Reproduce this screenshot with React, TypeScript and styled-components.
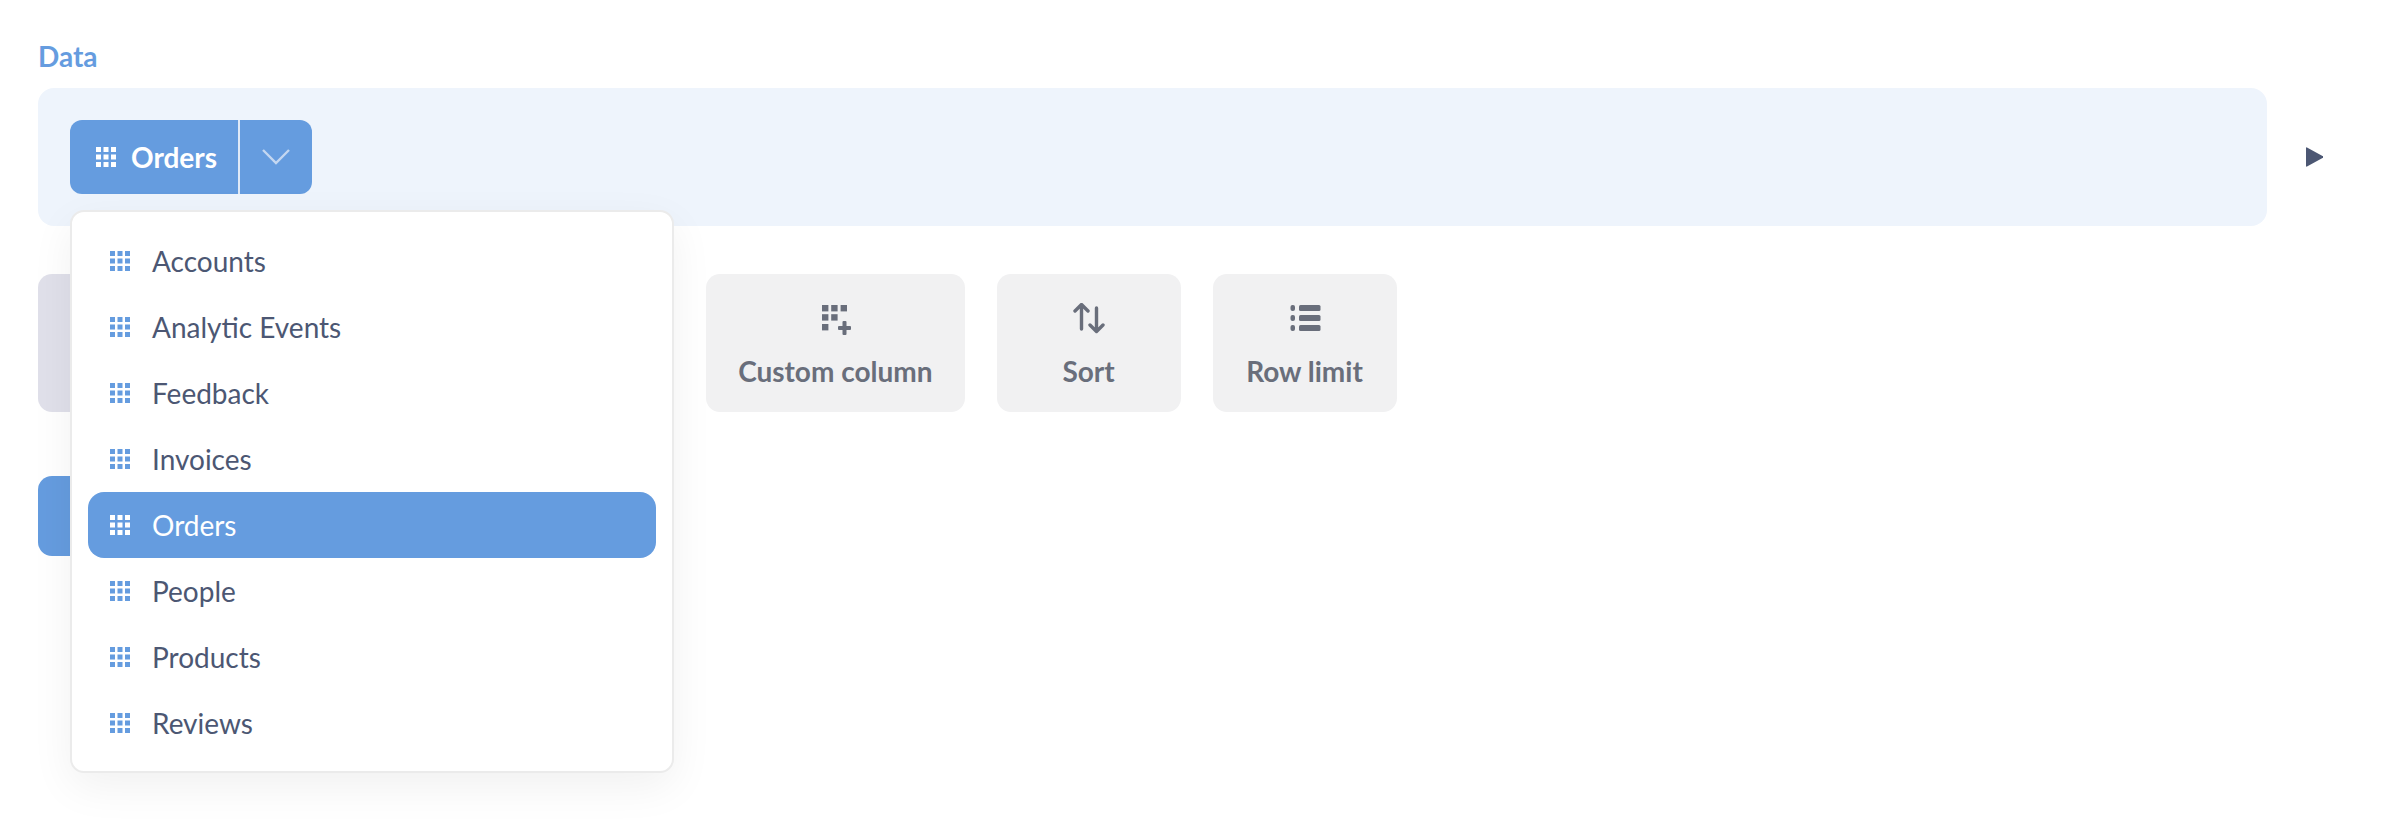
import React from 'react';
import styled, { createGlobalStyle } from 'styled-components';

const GlobalStyle = createGlobalStyle`
  html, body {
    margin: 0;
    background: #fff;
  }
  body {
    font-family: Lato, "Liberation Sans", sans-serif;
    overflow: hidden;
  }
  * {
    box-sizing: border-box;
  }
`;

const Page = styled.div`
  padding: 38px 38px 0;
  height: 822px;
`;

const StepTitle = styled.div`
  font-size: 28px;
  line-height: 36px;
  font-weight: 700;
  color: #659cdf;
  margin-bottom: 14px;
`;

const StepRow = styled.div`
  display: flex;
  align-items: center;
`;

const DataPanel = styled.div`
  width: 2229px;
  height: 138px;
  padding: 32px;
  border-radius: 16px;
  background: #eef4fc;
`;

const PickerWrap = styled.div`
  position: relative;
  width: 242px;
`;

const Picker = styled.div`
  display: flex;
  height: 74px;
  border-radius: 12px;
  overflow: hidden;
  background: #659cdf;
  color: #fff;
`;

const PickerLabel = styled.div`
  width: 168px;
  display: flex;
  align-items: center;
  gap: 15px;
  padding-left: 26px;
  font-size: 28px;
  font-weight: 700;
`;

const PickerToggle = styled.div`
  flex: 1;
  display: flex;
  align-items: center;
  justify-content: center;
  border-left: 2px solid #dfe9f7;
`;

const RunIcon = styled.svg`
  width: 17px;
  height: 20px;
  margin-left: 39px;
  fill: #4c5773;
`;

const Menu = styled.div`
  position: absolute;
  top: 90px;
  left: 0;
  z-index: 2;
  width: 604px;
  padding: 16px 16px 15px 16px;
  border: 2px solid #ebebeb;
  border-radius: 14px;
  background: #fff;
  box-shadow: 0 14px 44px rgba(0, 0, 0, 0.06);
`;

const MenuItem = styled.div<{ $active?: boolean }>`
  height: 66px;
  display: flex;
  align-items: center;
  gap: 22px;
  padding-left: 22px;
  border-radius: 16px;
  font-size: 28px;
  color: ${({ $active }) => ($active ? '#fff' : '#4c5773')};
  background: ${({ $active }) => ($active ? '#659cdf' : 'transparent')};
`;

const Actions = styled.div`
  display: flex;
  gap: 32px;
  margin-top: 48px;
`;

const ActionButton = styled.div<{ $bg?: string; $trailing?: number }>`
  min-width: 184px;
  height: 138px;
  margin-right: ${({ $trailing }) => $trailing ?? 0}px;
  padding: 29px 32px 0;
  display: flex;
  flex-direction: column;
  align-items: center;
  gap: 20px;
  border-radius: 14px;
  font-size: 28px;
  line-height: 32px;
  font-weight: 700;
  color: #696e7b;
  background: ${({ $bg }) => $bg ?? '#f1f1f2'};
`;

const VisualizeButton = styled.button`
  display: block;
  width: 240px;
  height: 80px;
  margin-top: 64px;
  padding: 0;
  border: 0;
  border-radius: 14px;
  background: #659cdf;
`;

const IconSvg = styled.svg`
  display: block;
  flex: none;
  fill: currentColor;
`;

const GridIcon: React.FC<{ color: string }> = ({ color }) => (
  <IconSvg width={20} height={20} viewBox='0 0 20 20' style={{ color }}>
    {[0, 7.5, 15].map((y) =>
      [0, 7.5, 15].map((x) => <rect key={`${x}-${y}`} x={x} y={y} width={5} height={5} />),
    )}
  </IconSvg>
);

const CustomColumnIcon = () => (
  <IconSvg width={32} height={32} viewBox='0 0 32 32'>
    <rect x={3} y={2} width={6.4} height={6.4} />
    <rect x={12.2} y={2} width={6.4} height={6.4} />
    <rect x={21.6} y={2} width={6.4} height={6.4} />
    <rect x={3} y={11.2} width={6.4} height={6.4} />
    <rect x={12.2} y={11.2} width={6.4} height={6.4} />
    <rect x={3} y={21} width={6.4} height={6.4} />
    <rect x={19} y={23} width={13} height={4} rx={1} />
    <rect x={23.5} y={18} width={4} height={14} rx={1} />
  </IconSvg>
);

const SortIcon = () => (
  <svg width={32} height={32} viewBox='0 0 32 32' fill='none' stroke='currentColor' strokeWidth={3.4} strokeLinecap='round' strokeLinejoin='round'>
    <path d='M8.5 26V2M2 8l6.5-6.5L15 8' />
    <path d='M23.5 5v23M17 22l6.5 6.5L30 22' />
  </svg>
);

const ListIcon = () => (
  <IconSvg width={32} height={32} viewBox='0 0 32 32'>
    <rect x={1.5} y={2} width={4.5} height={6} rx={2} />
    <rect x={1.5} y={12} width={4.5} height={6} rx={2} />
    <rect x={1.5} y={22} width={4.5} height={6} rx={2} />
    <rect x={10} y={2} width={21.5} height={6} rx={1.5} />
    <rect x={10} y={12} width={21.5} height={6} rx={1.5} />
    <rect x={10} y={22} width={21.5} height={6} rx={1.5} />
  </IconSvg>
);

const tables = ['Accounts', 'Analytic Events', 'Feedback', 'Invoices', 'Orders', 'People', 'Products', 'Reviews'];

const App = () => {
  return (
    <Page>
      <GlobalStyle />
      <StepTitle>Data</StepTitle>
      <StepRow>
        <DataPanel>
          <PickerWrap>
            <Picker>
              <PickerLabel>
                <GridIcon color='#fff' />
                Orders
              </PickerLabel>
              <PickerToggle>
                <svg width={28} height={16} viewBox='0 0 28 16' fill='none' stroke='#c3d7f1' strokeWidth={2.4}>
                  <path d='M1 1l13 13L27 1' />
                </svg>
              </PickerToggle>
            </Picker>
            <Menu>
              {tables.map((name) => (
                <MenuItem key={name} $active={name === 'Orders'}>
                  <GridIcon color={name === 'Orders' ? '#fff' : '#659cdf'} />
                  {name}
                </MenuItem>
              ))}
            </Menu>
          </PickerWrap>
        </DataPanel>
        <RunIcon viewBox='0 0 17 20'>
          <path d='M1 0.5L16.5 9a1 1 0 0 1 0 2L1 19.5a0.7 0.7 0 0 1-1-0.6V1.1a0.7 0.7 0 0 1 1-0.6z' />
        </RunIcon>
      </StepRow>
      <Actions>
        <ActionButton $bg='#e0e0ea'>
          <SortIcon />
          Filter
        </ActionButton>
        <ActionButton>
          <SortIcon />
          Summarize
        </ActionButton>
        <ActionButton $trailing={3}>
          <SortIcon />
          Join data
        </ActionButton>
        <ActionButton>
          <CustomColumnIcon />
          Custom column
        </ActionButton>
        <ActionButton>
          <SortIcon />
          Sort
        </ActionButton>
        <ActionButton>
          <ListIcon />
          Row limit
        </ActionButton>
      </Actions>
      <VisualizeButton aria-label='Visualize' />
    </Page>
  );
};

export default App;
